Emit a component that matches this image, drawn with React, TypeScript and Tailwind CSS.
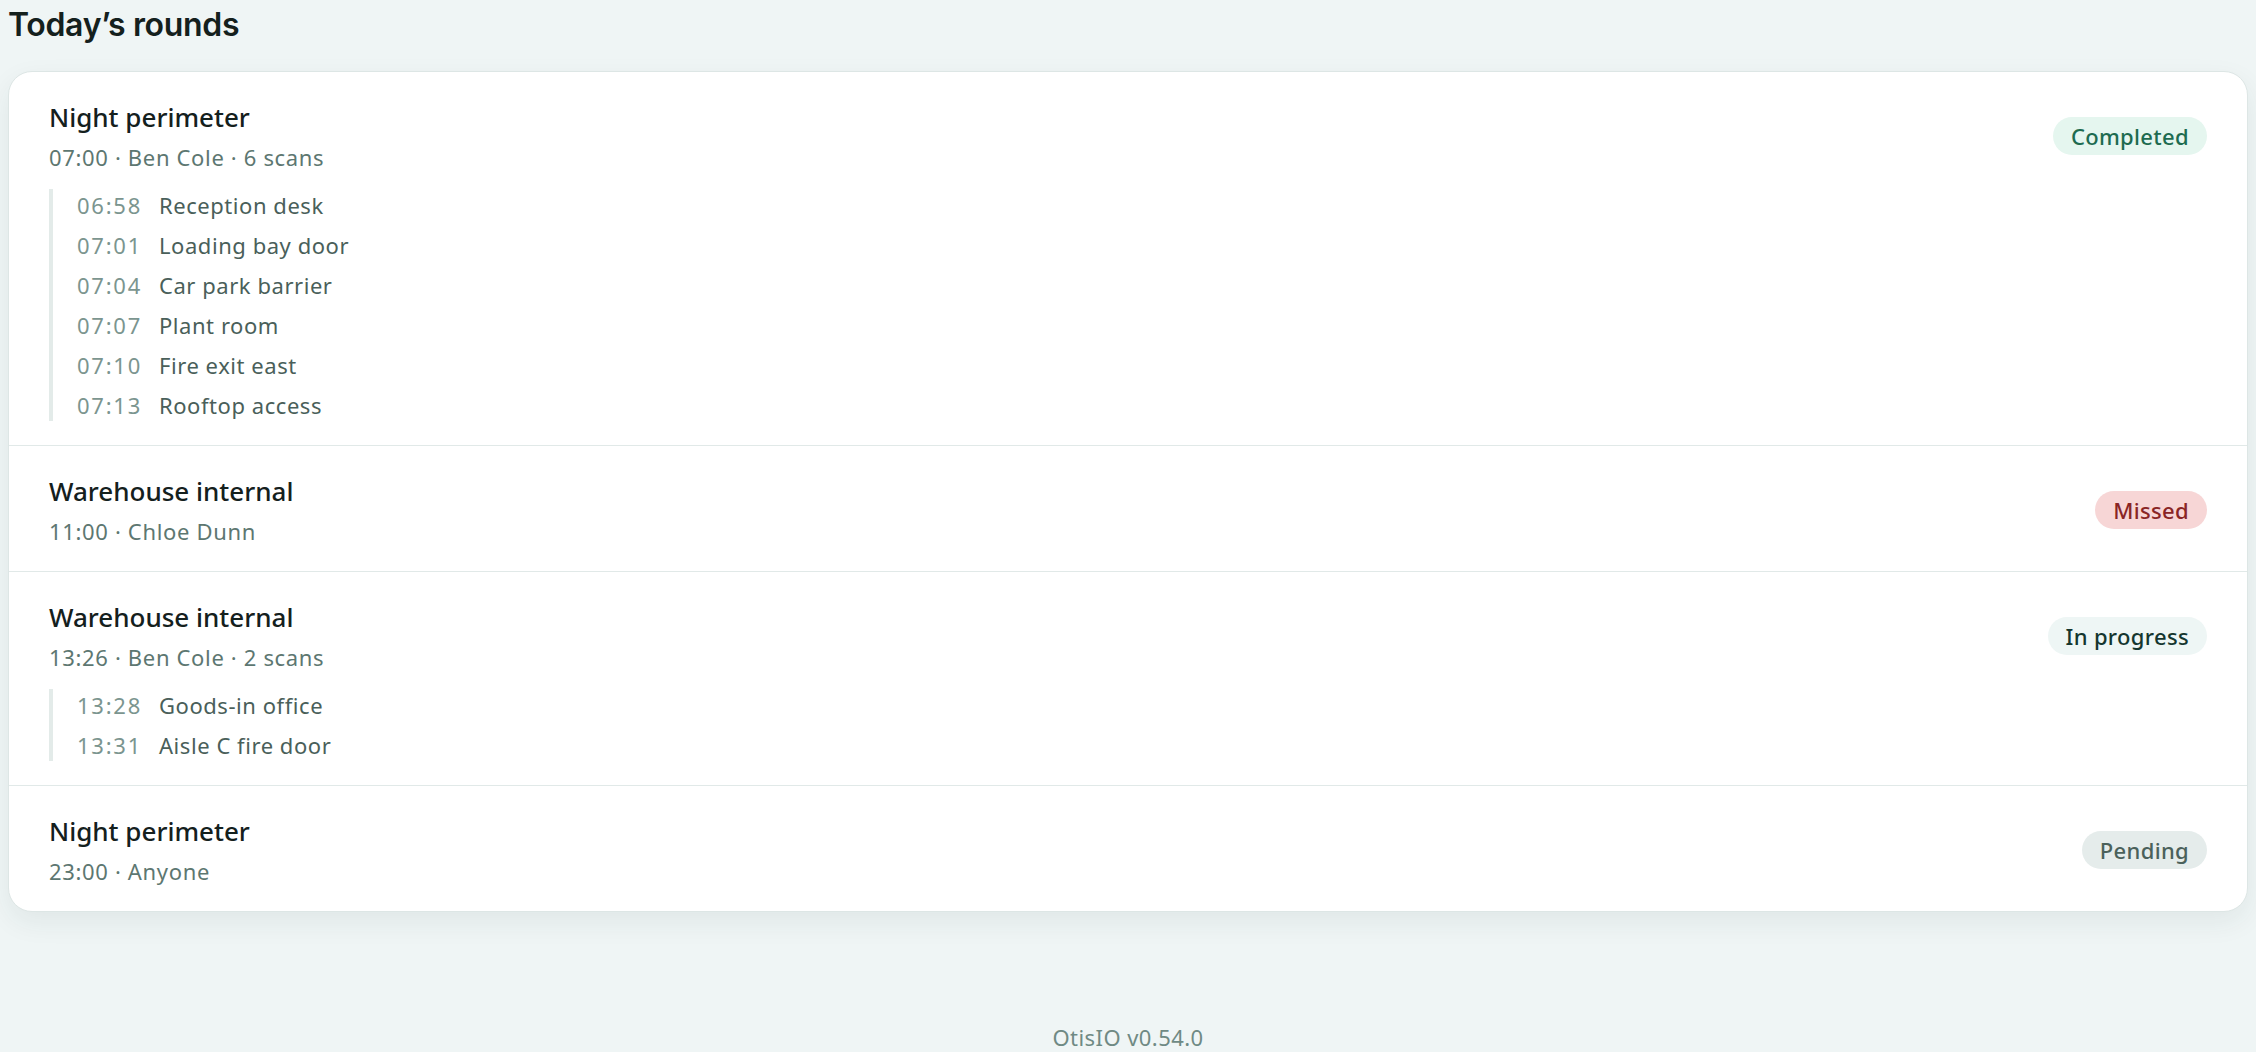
import React from 'react'

type Scan = { time: string; place: string }
type Status = 'completed' | 'missed' | 'progress' | 'pending'

type Round = {
  name: string
  meta: string
  status: Status
  scans?: Scan[]
}

const rounds: Round[] = [
  {
    name: 'Night perimeter',
    meta: '07:00 · Ben Cole · 6 scans',
    status: 'completed',
    scans: [
      { time: '06:58', place: 'Reception desk' },
      { time: '07:01', place: 'Loading bay door' },
      { time: '07:04', place: 'Car park barrier' },
      { time: '07:07', place: 'Plant room' },
      { time: '07:10', place: 'Fire exit east' },
      { time: '07:13', place: 'Rooftop access' },
    ],
  },
  { name: 'Warehouse internal', meta: '11:00 · Chloe Dunn', status: 'missed' },
  {
    name: 'Warehouse internal',
    meta: '13:26 · Ben Cole · 2 scans',
    status: 'progress',
    scans: [
      { time: '13:28', place: 'Goods-in office' },
      { time: '13:31', place: 'Aisle C fire door' },
    ],
  },
  { name: 'Night perimeter', meta: '23:00 · Anyone', status: 'pending' },
]

const badgeStyles: Record<Status, { label: string; cls: string }> = {
  completed: { label: 'Completed', cls: 'bg-[#e5f6ef] text-[#1d6b50]' },
  missed: { label: 'Missed', cls: 'bg-[#f7d6d6] text-[#8a2525]' },
  progress: { label: 'In progress', cls: 'bg-[#eef6f5] text-[#15362f]' },
  pending: { label: 'Pending', cls: 'bg-[#e5eceb] text-[#4b615b]' },
}

const StatusBadge = ({ status }: { status: Status }) => {
  const b = badgeStyles[status]
  return (
    <span
      className={`inline-flex h-[38px] items-center rounded-full px-[18px] text-[22px] font-medium tracking-[0.015em] ${b.cls}`}
    >
      {b.label}
    </span>
  )
}

const RoundRow = ({ round }: { round: Round }) => (
  <div className="border-b border-[#e1e9e8] px-10 pb-6 pt-[27px] last:border-b-0">
    <div className="flex items-center justify-between">
      <div>
        <div className="text-[26px] font-medium leading-9 text-[#14201d]">
          {round.name}
        </div>
        <div className="mt-[6px] text-[22px] leading-8 tracking-[0.03em] text-[#5d7771]">
          {round.meta}
        </div>
      </div>
      <StatusBadge status={round.status} />
    </div>
    {round.scans && (
      <ul className="mt-4 flex flex-col gap-2 border-l-4 border-[#e3ebe9] pl-6">
        {round.scans.map((s) => (
          <li key={s.time} className="flex text-[22px] leading-8">
            <span className="w-[82px] tabular-nums tracking-[0.08em] text-[#7b958f]">
              {s.time}
            </span>
            <span className="tracking-[0.025em] text-[#4a5f5a]">{s.place}</span>
          </li>
        ))}
      </ul>
    )}
  </div>
)

export default function App() {
  return (
    <div
      className="min-h-screen bg-[#eff5f5] px-2 pt-[7px]"
      style={{ fontFamily: '"Noto Sans", "Open Sans", sans-serif' }}
    >
      <h1
        className="text-[32px] font-semibold leading-9 tracking-[-0.01em] text-[#14201d]"
        style={{ fontFamily: 'Inter, "Noto Sans", sans-serif' }}
      >
        Today’s rounds
      </h1>
      <div className="mt-7 overflow-hidden rounded-[24px] border border-[#dde6e5] bg-white shadow-[0_10px_28px_rgba(30,55,50,0.07)]">
        {rounds.map((r, i) => (
          <RoundRow key={i} round={r} />
        ))}
      </div>
      <footer className="mt-[111px] text-center text-[22px] leading-7 tracking-[0.02em] text-[#6f8a84]">
        OtisIO v0.54.0
      </footer>
    </div>
  )
}
